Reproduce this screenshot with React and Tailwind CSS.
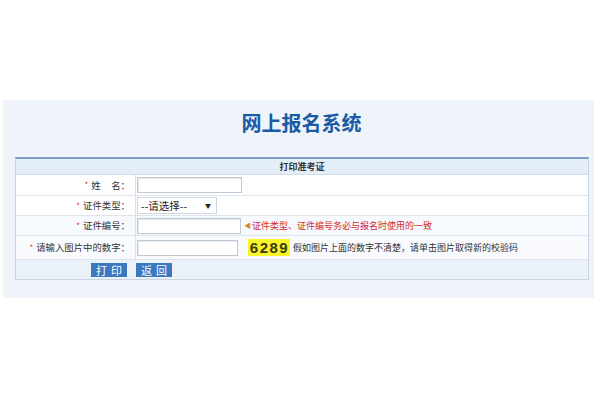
import React from 'react';

const cjk = { fontFamily: '"Noto Sans CJK SC", "Liberation Sans", sans-serif' };

const Label = ({ children }) => (
    <div className="w-[120px] shrink-0 flex items-center justify-end pr-[5px] border-r border-[#d9e2ec] text-[9.4px] text-[#333] whitespace-nowrap">
        <span className="text-[#e03030] mr-[3px] text-[8px]">*</span>
        {children}
    </div>
);

const TextBox = ({ w }) => (
    <div className={`${w} h-[16px] border border-[#bfc9d4] bg-white shadow-[inset_1px_1px_1px_#e4e8ec]`} />
);

const App = () => {
    return (
        <div className="w-[600px] h-[400px] bg-white pt-[100px] px-[3px]" style={cjk}>
            <div className="h-[198px] w-[591px] bg-[#eef4fa] pt-[10px]">
                <h1 className="text-center text-[20px] leading-[26px] font-bold text-[#1b5ba6] pl-[6px]">网上报名系统</h1>

                <div className="mt-[21px] ml-[12px] w-[574px] border border-[#c8d4e2] border-t-2 border-t-[#7c9ec8]">
                    <div className="h-[16px] flex items-center justify-center bg-[#e4eef9] text-[9px] font-bold text-[#333] border-b border-[#d4dde8]">
                        打印准考证
                    </div>

                    <div className="flex h-[21px] bg-white border-b border-[#dde4ec]">
                        <Label>姓&nbsp;&nbsp;&nbsp;&nbsp;&nbsp;名：</Label>
                        <div className="flex items-center pl-[1px]">
                            <TextBox w="w-[105px]" />
                        </div>
                    </div>

                    <div className="flex h-[20px] bg-white border-b border-[#dde4ec]">
                        <Label>证件类型：</Label>
                        <div className="flex items-center pl-[1px]">
                            <div className="w-[80px] h-[17px] border border-[#cdd5dd] bg-white flex items-center justify-between pl-[3px] pr-[5px] text-[10.5px] text-[#222]">
                                <span>--请选择--</span>
                                <span className="text-[6px] text-[#222]">▼</span>
                            </div>
                        </div>
                    </div>

                    <div className="flex h-[20px] bg-[#f6f9fd] border-b border-[#dde4ec]">
                        <Label>证件编号：</Label>
                        <div className="flex items-center pl-[1px]">
                            <TextBox w="w-[104px]" />
                            <span className="ml-[3px] mr-[1px] text-[#e08a1e] text-[7px]">◀</span>
                            <span className="text-[9px] text-[#d42a2a] whitespace-nowrap">证件类型、证件编号务必与报名时使用的一致</span>
                        </div>
                    </div>

                    <div className="flex h-[24px] bg-[#f8fafd] border-b border-[#dde4ec]">
                        <Label>请输入图片中的数字：</Label>
                        <div className="flex items-center pl-[1px]">
                            <TextBox w="w-[101px]" />
                            <div className="ml-[10px] w-[42px] h-[17px] bg-[#f8f52a] flex items-center justify-center text-[15px] font-bold tracking-[1.5px] pl-[1px] text-[#3a3a10] leading-none" style={{ fontFamily: '"Liberation Sans", sans-serif' }}>
                                6289
                            </div>
                            <span className="ml-[3px] text-[9px] text-[#333] whitespace-nowrap">假如图片上面的数字不清楚，请单击图片取得新的校验码</span>
                        </div>
                    </div>

                    <div className="flex h-[19px] bg-[#eaf1f9] items-center pl-[75px] gap-[9px]">
                        <button className="w-[36px] h-[14px] bg-[#3c78be] text-white text-[11px] leading-[14px] tracking-[4px] pl-[4px]">打印</button>
                        <button className="w-[36px] h-[14px] bg-[#3c78be] text-white text-[11px] leading-[14px] tracking-[4px] pl-[4px]">返回</button>
                    </div>
                </div>
            </div>
        </div>
    );
};

export default App;
